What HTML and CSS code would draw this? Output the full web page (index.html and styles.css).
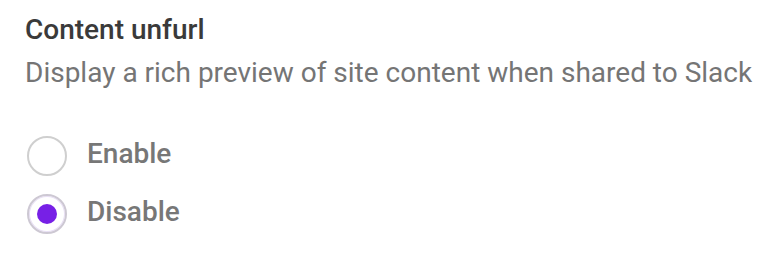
FILE: index.html
```html
<!DOCTYPE html>
<html>
<head>
<meta charset="utf-8">
<link rel="stylesheet" href="styles.css">
</head>
<body>
<section class="setting">
  <h2 class="title">Content unfurl</h2>
  <p class="desc">Display a rich preview of site content when shared to Slack</p>
  <div class="options">
    <label class="option">
      <span class="radio"></span>
      <span class="label">Enable</span>
    </label>
    <label class="option">
      <span class="radio checked"></span>
      <span class="label">Disable</span>
    </label>
  </div>
</section>
</body>
</html>
```

FILE: styles.css
```css
html, body {
  margin: 0;
  background: #ffffff;
}
body {
  font-family: Roboto, "Liberation Sans", sans-serif;
}
.setting {
  padding: 13px 0 0 25px;
}
.title {
  margin: 0;
  font-size: 28px;
  line-height: 34px;
  font-weight: 500;
  color: #3a3a3a;
}
.desc {
  margin: 9px 0 0;
  font-size: 28px;
  line-height: 34px;
  font-weight: 400;
  color: #757575;
  white-space: nowrap;
}
.options {
  display: flex;
  flex-direction: column;
  gap: 18px;
  margin-top: 46px;
}
.option {
  display: flex;
  align-items: flex-start;
  gap: 20px;
  height: 40px;
}
.radio {
  box-sizing: border-box;
  width: 40px;
  height: 40px;
  margin-left: 2px;
  border-radius: 50%;
  border: 2px solid #cfcfcf;
  display: flex;
  align-items: center;
  justify-content: center;
}
.radio.checked {
  border-color: #cdc8d3;
  box-shadow: inset 0 0 0 1px #e9e0f6;
}
.radio.checked::after {
  content: "";
  width: 20px;
  height: 20px;
  border-radius: 50%;
  background: #7720e6;
}
.label {
  font-size: 28px;
  line-height: 35px;
  font-weight: 500;
  color: #777777;
}
```
